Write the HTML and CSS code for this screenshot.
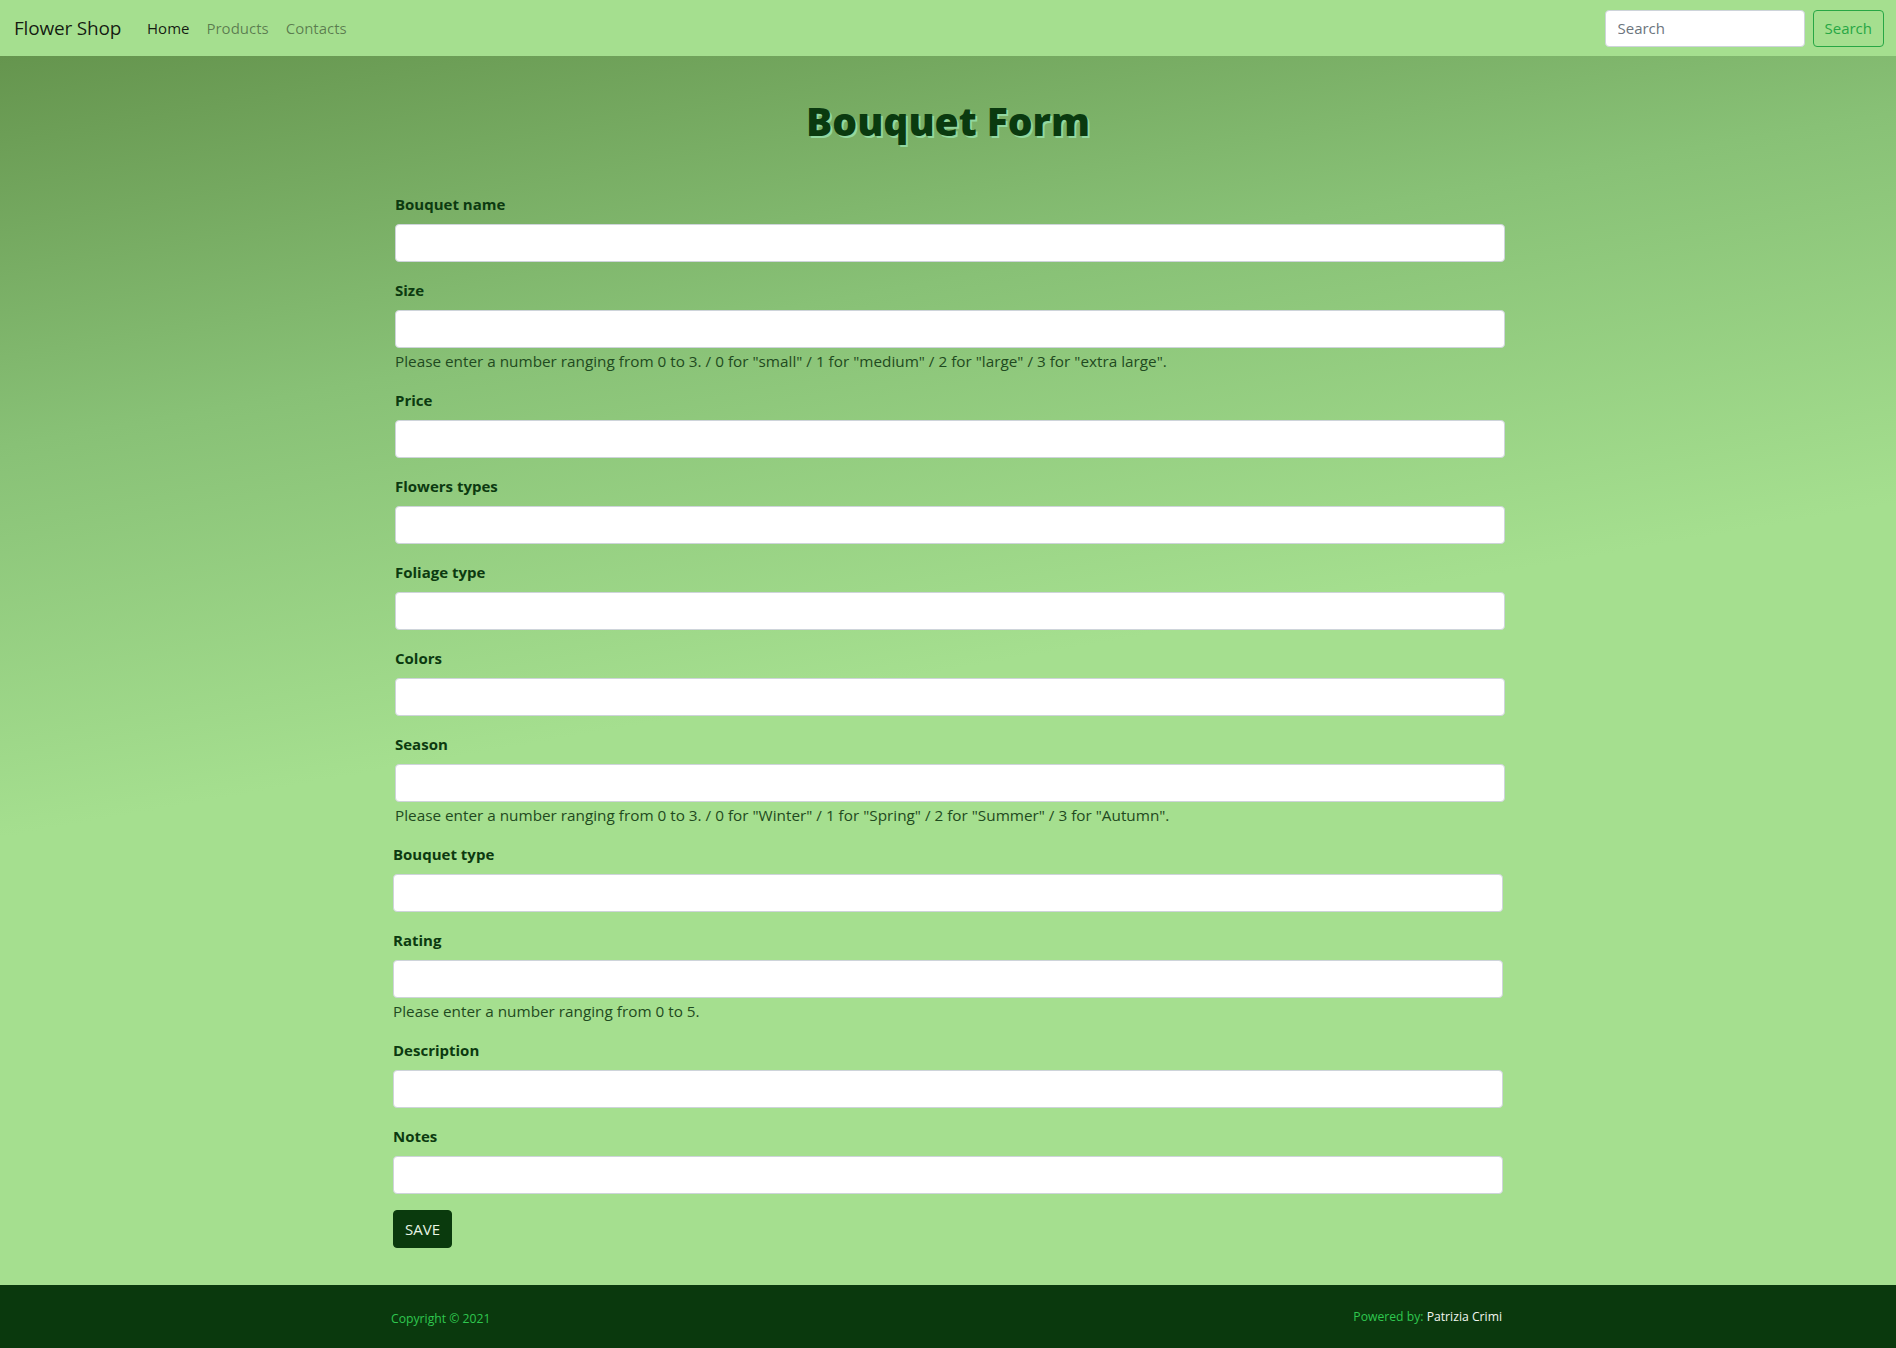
FILE: index.html
```html
<!DOCTYPE html>
<html lang="en">
<head>
<meta charset="utf-8">
<title>Flower Shop - Bouquet Form</title>
<link rel="stylesheet" href="styles.css">
</head>
<body>
<nav class="navbar">
  <a class="brand" href="#">Flower Shop</a>
  <ul class="nav-links">
    <li><a class="nav-link active" href="#">Home</a></li>
    <li><a class="nav-link" href="#">Products</a></li>
    <li><a class="nav-link" href="#">Contacts</a></li>
  </ul>
  <form class="nav-search">
    <input class="search-input" type="search" placeholder="Search">
    <button class="search-btn" type="button">Search</button>
  </form>
</nav>

<main class="main">
  <div class="container">
    <h1 class="title">Bouquet Form</h1>
    <form class="bouquet-form">
      <div class="group-a">
        <div class="form-group">
          <label class="label">Bouquet name</label>
          <input class="form-control" type="text">
        </div>
        <div class="form-group">
          <label class="label">Size</label>
          <input class="form-control" type="text">
          <small class="help">Please enter a number ranging from 0 to 3. / 0 for "small" / 1 for "medium" / 2 for "large" / 3 for "extra large".</small>
        </div>
        <div class="form-group">
          <label class="label">Price</label>
          <input class="form-control" type="text">
        </div>
        <div class="form-group">
          <label class="label">Flowers types</label>
          <input class="form-control" type="text">
        </div>
        <div class="form-group">
          <label class="label">Foliage type</label>
          <input class="form-control" type="text">
        </div>
        <div class="form-group">
          <label class="label">Colors</label>
          <input class="form-control" type="text">
        </div>
        <div class="form-group">
          <label class="label">Season</label>
          <input class="form-control" type="text">
          <small class="help">Please enter a number ranging from 0 to 3. / 0 for "Winter" / 1 for "Spring" / 2 for "Summer" / 3 for "Autumn".</small>
        </div>
      </div>
      <div class="form-group">
        <label class="label">Bouquet type</label>
        <input class="form-control" type="text">
      </div>
      <div class="form-group">
        <label class="label">Rating</label>
        <input class="form-control" type="text">
        <small class="help">Please enter a number ranging from 0 to 5.</small>
      </div>
      <div class="form-group">
        <label class="label">Description</label>
        <input class="form-control" type="text">
      </div>
      <div class="form-group">
        <label class="label">Notes</label>
        <input class="form-control" type="text">
      </div>
      <button class="save-btn" type="button">SAVE</button>
    </form>
  </div>
</main>

<footer class="footer">
  <div class="footer-inner">
    <span class="copyright">Copyright © 2021</span>
    <span class="powered">Powered by: <span class="author">Patrizia Crimi</span></span>
  </div>
</footer>
</body>
</html>
```

FILE: styles.css
```css
* { box-sizing: border-box; }

html, body {
  margin: 0;
  padding: 0;
}

body {
  font-family: "Open Sans", "Noto Sans", sans-serif;
  font-size: 16px;
  line-height: 1.5;
  color: #212529;
  background: #a5df8f;
}

/* Navbar */
.navbar {
  height: 56px;
  background: #a5df8f;
  display: flex;
  align-items: center;
  padding: 0 12px 0 14px;
}

.brand {
  font-size: 19px;
  color: rgba(0, 0, 0, 0.88);
  text-decoration: none;
  margin-right: 26px;
  letter-spacing: -0.2px;
}

.nav-links {
  display: flex;
  list-style: none;
  margin: 0;
  padding: 0;
  flex: 1;
  gap: 17px;
}

.nav-link {
  font-size: 15px;
  color: rgba(0, 0, 0, 0.45);
  text-decoration: none;
}

.nav-link.active {
  color: rgba(0, 0, 0, 0.88);
}

.nav-search {
  display: flex;
  align-items: center;
  gap: 8px;
}

.search-input {
  width: 200px;
  height: 37px;
  border: 1px solid #ced4da;
  border-radius: 4px;
  padding: 6px 12px;
  font-family: inherit;
  font-size: 15px;
  color: #495057;
  background: #fff;
}

.search-input::placeholder { color: #6c757d; }

.search-btn {
  height: 37px;
  padding: 0 11px;
  border: 1px solid #28a745;
  border-radius: 4px;
  background: transparent;
  color: #28a745;
  font-family: inherit;
  font-size: 15px;
}

/* Main */
.main {
  background: linear-gradient(170deg, #65954e 0%, #88c176 25%, #a5df8f 50%, #a5df8f 100%);
  padding: 42px 0 37px;
}

.container {
  width: 1140px;
  margin: 0 auto;
  padding: 0 15px;
}

.title {
  margin: 0 0 47px;
  text-align: center;
  font-family: "Open Sans", "Noto Sans", sans-serif;
  font-weight: 800;
  font-size: 39px;
  line-height: 1.2;
  color: #0a3a0f;
  text-shadow: 2px 2px 0 #93d8a0;
  letter-spacing: 0;
}

.group-a {
  margin: 0 -2px 0 2px;
}

.form-group {
  margin-bottom: 16px;
}

.label {
  display: block;
  margin-bottom: 8px;
  font-weight: 700;
  font-size: 15px;
  line-height: 24px;
  color: #0c3a10;
}

.form-control {
  display: block;
  width: 100%;
  height: 38px;
  border: 1px solid #ced4da;
  border-radius: 4px;
  background: #fff;
  padding: 6px 12px;
  font-family: inherit;
  font-size: 16px;
}

.help {
  display: block;
  margin-top: 2px;
  font-size: 15.3px;
  line-height: 22px;
  color: #1f4a20;
}

.save-btn {
  display: block;
  height: 38px;
  padding: 0 11px;
  border: 1px solid #0a3a0d;
  border-radius: 4px;
  background: #0a3a0d;
  color: #e8f5e4;
  font-family: inherit;
  font-size: 15px;
}

/* Footer */
.footer {
  background: #0a390d;
  height: 64px;
}

.footer-inner {
  width: 1140px;
  margin: 0 auto;
  padding: 0 16px 0 13px;
  height: 100%;
  display: flex;
  justify-content: space-between;
  align-items: center;
  font-size: 12.2px;
}

.copyright {
  color: #2fc74f;
  padding-top: 4px;
}

.powered {
  color: #2fc74f;
}

.author {
  color: #f2f7f0;
}
```
